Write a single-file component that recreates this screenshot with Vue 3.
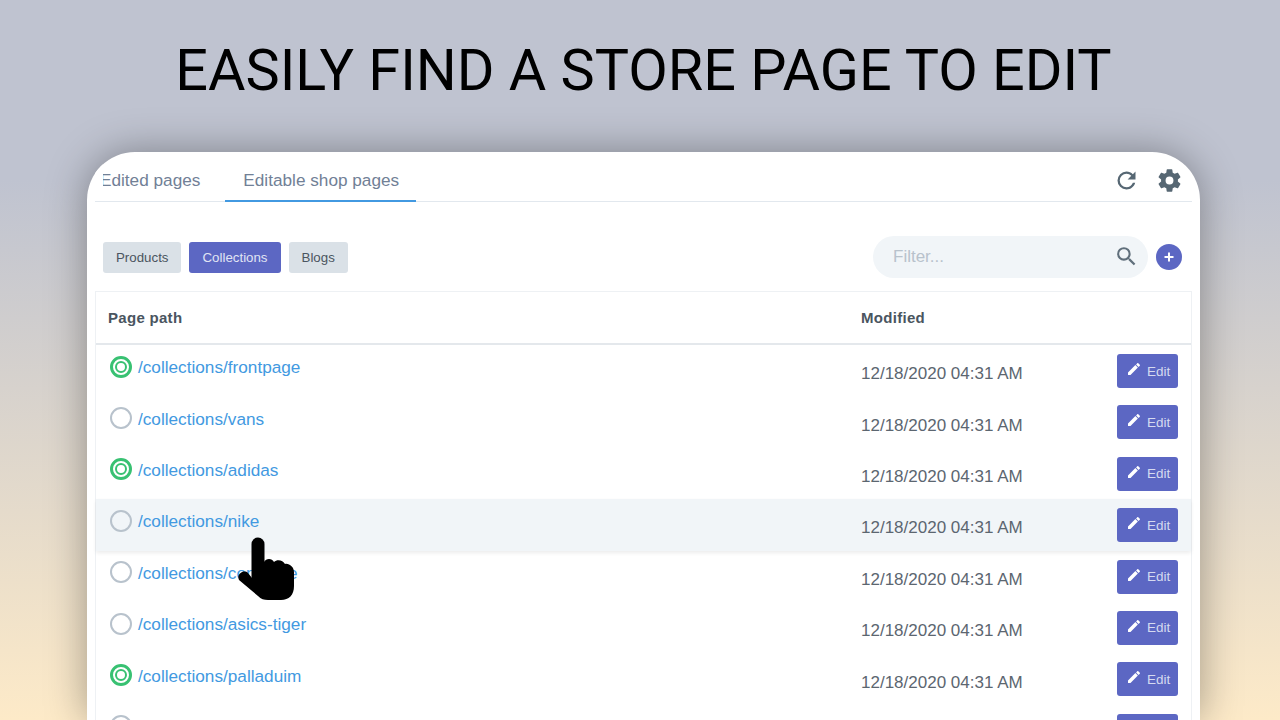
<template>
  <div class="page">
    <h1 class="headline">EASILY FIND A STORE PAGE TO EDIT</h1>

    <div class="card">
      <div class="tabs">
        <a class="tab">Edited pages</a>
        <a class="tab current">Editable shop pages</a>
        <div class="tab-tools">
          <svg class="tool refresh" viewBox="0 0 24 24"><path :d="icons.refresh" /></svg>
          <svg class="tool cog" viewBox="0 0 24 24"><path :d="icons.cog" /></svg>
        </div>
      </div>

      <div class="toolbar">
        <div class="filters">
          <button
            v-for="f in filters"
            :key="f"
            class="chip"
            :class="{ on: f === 'Collections' }"
          >{{ f }}</button>
        </div>
        <div class="search">
          <span class="placeholder">Filter...</span>
          <svg viewBox="0 0 24 24"><path :d="icons.search" /></svg>
        </div>
        <span class="add">
          <svg viewBox="0 0 12 12"><path d="M6 1.5V10.5M1.5 6H10.5" /></svg>
        </span>
      </div>

      <div class="table">
        <div class="row head">
          <div class="path">Page path</div>
          <div class="modified">Modified</div>
        </div>
        <div
          v-for="(r, i) in rows"
          :key="i"
          class="row"
          :class="{ hovered: r.path === '/collections/nike' }"
        >
          <div class="path">
            <span class="status" :class="{ live: r.live }"></span>
            <a v-if="r.path" class="link">{{ r.path }}</a>
          </div>
          <div v-if="r.path" class="modified">12/18/2020 04:31 AM</div>
          <button class="edit">
            <template v-if="r.path">
              <svg viewBox="0 0 24 24"><path :d="icons.pencil" /></svg>
              Edit
            </template>
          </button>
        </div>
      </div>
    </div>

    <svg class="hand" viewBox="0 0 60 70">
      <path d="M22 8V42" class="finger" />
      <path d="M28 26C30 22 36 22 38 26C41 23 47 24 49 28C53 27 58 31 58 36V50C58 59 53 64 45 64H32C28 64 25 63 22 60L3 44C0 38 8 33 12 37L16 42V30Z" />
    </svg>
  </div>
</template>

<script setup>
const filters = ['Products', 'Collections', 'Blogs'];

// the last row only shows its top few pixels, no text reaches the frame
const rows = [
  { path: '/collections/frontpage', live: true },
  { path: '/collections/vans', live: false },
  { path: '/collections/adidas', live: true },
  { path: '/collections/nike', live: false },
  { path: '/collections/converse', live: false },
  { path: '/collections/asics-tiger', live: false },
  { path: '/collections/palladuim', live: true },
  { path: '', live: false },
];

const icons = {
  refresh: 'M17.65,6.35C16.2,4.9 14.21,4 12,4A8,8 0 0,0 4,12A8,8 0 0,0 12,20C15.73,20 18.84,17.45 19.73,14H17.65C16.83,16.33 14.61,18 12,18A6,6 0 0,1 6,12A6,6 0 0,1 12,6C13.66,6 15.14,6.69 16.22,7.78L13,11H20V4L17.65,6.35Z',
  cog: 'M12,15.5A3.5,3.5 0 0,1 8.5,12A3.5,3.5 0 0,1 12,8.5A3.5,3.5 0 0,1 15.5,12A3.5,3.5 0 0,1 12,15.5M19.43,12.97C19.47,12.65 19.5,12.33 19.5,12C19.5,11.67 19.47,11.34 19.43,11L21.54,9.37C21.73,9.22 21.78,8.95 21.66,8.73L19.66,5.27C19.54,5.05 19.27,4.96 19.05,5.05L16.56,6.05C16.04,5.66 15.5,5.32 14.87,5.07L14.5,2.42C14.46,2.18 14.25,2 14,2H10C9.75,2 9.54,2.18 9.5,2.42L9.13,5.07C8.5,5.32 7.96,5.66 7.44,6.05L4.95,5.05C4.73,4.96 4.46,5.05 4.34,5.27L2.34,8.73C2.21,8.95 2.27,9.22 2.46,9.37L4.57,11C4.53,11.34 4.5,11.67 4.5,12C4.5,12.33 4.53,12.65 4.57,12.97L2.46,14.63C2.27,14.78 2.21,15.05 2.34,15.27L4.34,18.73C4.46,18.95 4.73,19.03 4.95,18.95L7.44,17.94C7.96,18.34 8.5,18.68 9.13,18.93L9.5,21.58C9.54,21.82 9.75,22 10,22H14C14.25,22 14.46,21.82 14.5,21.58L14.87,18.93C15.5,18.67 16.04,18.34 16.56,17.94L19.05,18.95C19.27,19.03 19.54,18.95 19.66,18.73L21.66,15.27C21.78,15.05 21.73,14.78 21.54,14.63L19.43,12.97Z',
  search: 'M9.5,3A6.5,6.5 0 0,1 16,9.5C16,11.11 15.41,12.59 14.44,13.73L14.71,14H15.5L20.5,19L19,20.5L14,15.5V14.71L13.73,14.44C12.59,15.41 11.11,16 9.5,16A6.5,6.5 0 0,1 3,9.5A6.5,6.5 0 0,1 9.5,3M9.5,5C7,5 5,7 5,9.5C5,12 7,14 9.5,14C12,14 14,12 14,9.5C14,7 12,5 9.5,5Z',
  pencil: 'M20.71,7.04C21.1,6.65 21.1,6 20.71,5.63L18.37,3.29C18,2.9 17.35,2.9 16.96,3.29L15.12,5.12L18.87,8.87M3,17.25V21H6.75L17.81,9.93L14.06,6.18L3,17.25Z',
};
</script>

<style>
html, body {
  margin: 0;
  overflow: hidden;
}
</style>

<style scoped>
.page {
  position: relative;
  width: 1280px;
  height: 720px;
  overflow: hidden;
  background: linear-gradient(180deg, #bfc3d0 0%, #bfc3d0 25%, #fdeac8 100%);
  font-family: "Liberation Sans", Arial, sans-serif;
}

.headline {
  margin: 0;
  height: 152px;
  padding: 34px 0 0 7px;
  box-sizing: border-box;
  text-align: center;
  font-family: Roboto, sans-serif;
  font-size: 57.5px;
  line-height: 74px;
  font-weight: 400;
  color: #000;
}

.card {
  width: 1113px;
  height: 568px;
  margin-left: 87px;
  padding: 0 8px;
  box-sizing: border-box;
  background: #fff;
  border-radius: 48px 48px 0 0;
  box-shadow: 0 0 40px rgba(0, 0, 0, 0.35);
  overflow: hidden;
}

.tabs {
  position: relative;
  display: flex;
  height: 49px;
  border-bottom: 1px solid #e2e8ee;
  font-size: 17.2px;
  color: #718096;
}

/* the first tab is scrolled slightly under the card edge */
.tabs::before {
  content: "";
  position: absolute;
  left: 0;
  top: 0;
  width: 8px;
  height: 48px;
  background: #fff;
}

.tab {
  padding: 18px 17px 0;
  height: 31px;
  line-height: 21px;
  white-space: nowrap;
}

.tab:first-child {
  padding-left: 5px;
  padding-right: 25px;
}

.tab.current {
  height: 30px;
  padding-left: 18px;
  border-bottom: 2px solid #4299e1;
}

.tab-tools {
  display: flex;
  align-items: center;
  gap: 16px;
  margin-left: auto;
  padding-right: 9px;
  height: 56px;
}

.tool {
  fill: #566773;
}

.refresh {
  width: 27px;
  height: 27px;
}

.cog {
  width: 27px;
  height: 27px;
}

.toolbar {
  display: flex;
  align-items: center;
  height: 89px;
  padding: 20px 10px 0 8px;
  box-sizing: border-box;
}

.filters {
  display: flex;
  gap: 8px;
  flex: 1;
  padding-top: 2px;
}

.chip {
  height: 31px;
  padding: 0 13px;
  border: 0;
  border-radius: 3px;
  background: #dae1e7;
  color: #4a5560;
  font-family: inherit;
  font-size: 13.3px;
}

.chip.on {
  background: #5c67c3;
  color: #e0e4f4;
}

.search {
  display: flex;
  align-items: center;
  justify-content: space-between;
  width: 275px;
  height: 42px;
  padding: 0 9px 0 20px;
  box-sizing: border-box;
  border-radius: 21px;
  background: #f1f5f8;
  font-size: 17px;
  color: #b8c2cc;
}

.placeholder {
  margin-top: 1px;
}

.search svg {
  width: 25px;
  height: 25px;
  fill: #606f7b;
}

.add {
  display: flex;
  align-items: center;
  justify-content: center;
  width: 26px;
  height: 26px;
  margin-left: 8px;
  border-radius: 50%;
  background: #5c67c3;
}

.add svg {
  width: 12px;
  height: 12px;
  fill: none;
  stroke: #fff;
  stroke-width: 2px;
}

.table {
  border: 1px solid #eef1f4;
  border-bottom: 0;
  font-size: 17px;
}

.row {
  position: relative;
  display: flex;
  align-items: center;
  height: 51.4px;
  padding: 0 13px 0 12px;
}

.row.head {
  box-sizing: border-box;
  height: 53px;
  border-bottom: 2px solid #e4e8ec;
  font-size: 15px;
  font-weight: 700;
  color: #4a5560;
  letter-spacing: 0.3px;
}

.row.hovered {
  background: #f1f5f8;
  box-shadow: 0 2px 4px rgba(0, 0, 0, 0.08);
}

.path {
  display: flex;
  align-items: center;
  gap: 6px;
  width: 753px;
}

.row:not(.head) .path {
  margin-top: -6px;
  padding-left: 2px;
  width: 751px;
}

.status {
  width: 22px;
  height: 22px;
  margin-top: -2px;
  box-sizing: border-box;
  border: 2px solid #b8c2cc;
  border-radius: 50%;
  position: relative;
}

.status.live {
  border: 3px solid #38c172;
}

.status.live::after {
  content: "";
  position: absolute;
  inset: 2px;
  border: 2px solid #38c172;
  border-radius: 50%;
}

.link {
  color: #4299e1;
  font-size: 17.2px;
}

.row:not(.head) .modified {
  color: #5c6670;
  margin-top: 7px;
}

.edit {
  display: flex;
  align-items: center;
  gap: 5px;
  position: absolute;
  right: 13px;
  top: 9px;
  width: 61px;
  height: 34px;
  padding: 0 0 0 9px;
  box-sizing: border-box;
  border: 0;
  border-radius: 3px;
  background: #5c67c3;
  color: #d5daf0;
  font-family: inherit;
  font-size: 13.5px;
}

.edit svg {
  width: 16px;
  height: 16px;
  fill: #fff;
  margin-top: -4px;
}

.hand {
  position: absolute;
  left: 236px;
  top: 536px;
  width: 60px;
  height: 70px;
  fill: #000;
}

.finger {
  fill: none;
  stroke: #000;
  stroke-width: 13px;
  stroke-linecap: round;
}
</style>
